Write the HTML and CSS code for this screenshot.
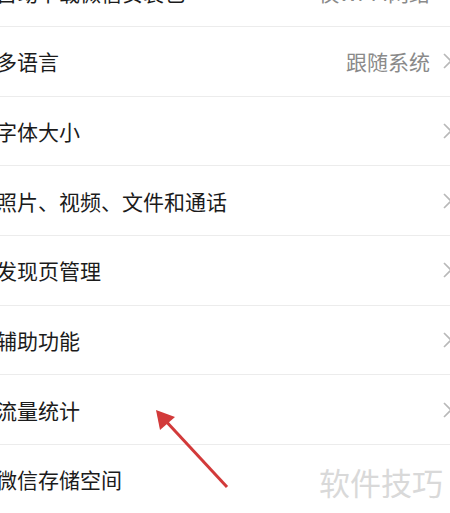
FILE: index.html
```html
<!DOCTYPE html>
<html lang="zh-CN">
<head>
<meta charset="utf-8">
<link rel="stylesheet" href="styles.css">
</head>
<body>
<div class="page">
  <ul class="list">
    <li class="row"><span class="label">自动下载微信安装包</span><span class="right"><span class="value">仅Wi-Fi网络</span><svg class="chev" viewBox="0 0 10 16" width="10" height="16"><path d="M1 1 L8 8 L1 15" /></svg></span></li>
    <li class="row"><span class="label">多语言</span><span class="right"><span class="value">跟随系统</span><svg class="chev" viewBox="0 0 10 16" width="10" height="16"><path d="M1 1 L8 8 L1 15" /></svg></span></li>
    <li class="row"><span class="label">字体大小</span><span class="right"><svg class="chev" viewBox="0 0 10 16" width="10" height="16"><path d="M1 1 L8 8 L1 15" /></svg></span></li>
    <li class="row"><span class="label">照片、视频、文件和通话</span><span class="right"><svg class="chev" viewBox="0 0 10 16" width="10" height="16"><path d="M1 1 L8 8 L1 15" /></svg></span></li>
    <li class="row"><span class="label">发现页管理</span><span class="right"><svg class="chev" viewBox="0 0 10 16" width="10" height="16"><path d="M1 1 L8 8 L1 15" /></svg></span></li>
    <li class="row"><span class="label">辅助功能</span><span class="right"><svg class="chev" viewBox="0 0 10 16" width="10" height="16"><path d="M1 1 L8 8 L1 15" /></svg></span></li>
    <li class="row"><span class="label">流量统计</span><span class="right"><svg class="chev" viewBox="0 0 10 16" width="10" height="16"><path d="M1 1 L8 8 L1 15" /></svg></span></li>
    <li class="row"><span class="label">微信存储空间</span><span class="right"></span></li>
  </ul>
  <div class="watermark">软件技巧</div>
  <svg class="arrow" width="450" height="513" viewBox="0 0 450 513">
    <line x1="227" y1="487" x2="163" y2="418" />
    <polygon points="156,410 160,430 175,417" />
  </svg>
</div>
</body>
</html>
```

FILE: styles.css
```css
html, body {
  margin: 0;
  padding: 0;
  background: #ffffff;
  overflow: hidden;
}

.page {
  position: relative;
  width: 450px;
  height: 513px;
  overflow: hidden;
  font-family: "Noto Sans CJK SC", "Noto Sans", sans-serif;
}

.list {
  list-style: none;
  margin: -42.67px -3px 0 0;
  padding: 0;
}

.row {
  box-sizing: border-box;
  height: 69.67px;
  display: flex;
  align-items: center;
  justify-content: space-between;
  border-bottom: 1px solid #ececec;
}

.label {
  margin-left: -4px;
  font-size: 21px;
  color: #1b1b1b;
  white-space: nowrap;
}

.right {
  display: flex;
  align-items: center;
  gap: 13px;
}

.value {
  font-size: 21px;
  color: #8a8a8a;
  white-space: nowrap;
}

.chev {
  display: block;
}

.chev path {
  fill: none;
  stroke: #b8b8b8;
  stroke-width: 1.6;
}

.watermark {
  position: absolute;
  left: 319px;
  top: 459px;
  font-size: 31px;
  color: #d9d9d9;
  letter-spacing: 0;
  white-space: nowrap;
}

.arrow {
  position: absolute;
  left: 0;
  top: 0;
}

.arrow line {
  stroke: #d23a3a;
  stroke-width: 3;
}

.arrow polygon {
  fill: #d23a3a;
}
```
